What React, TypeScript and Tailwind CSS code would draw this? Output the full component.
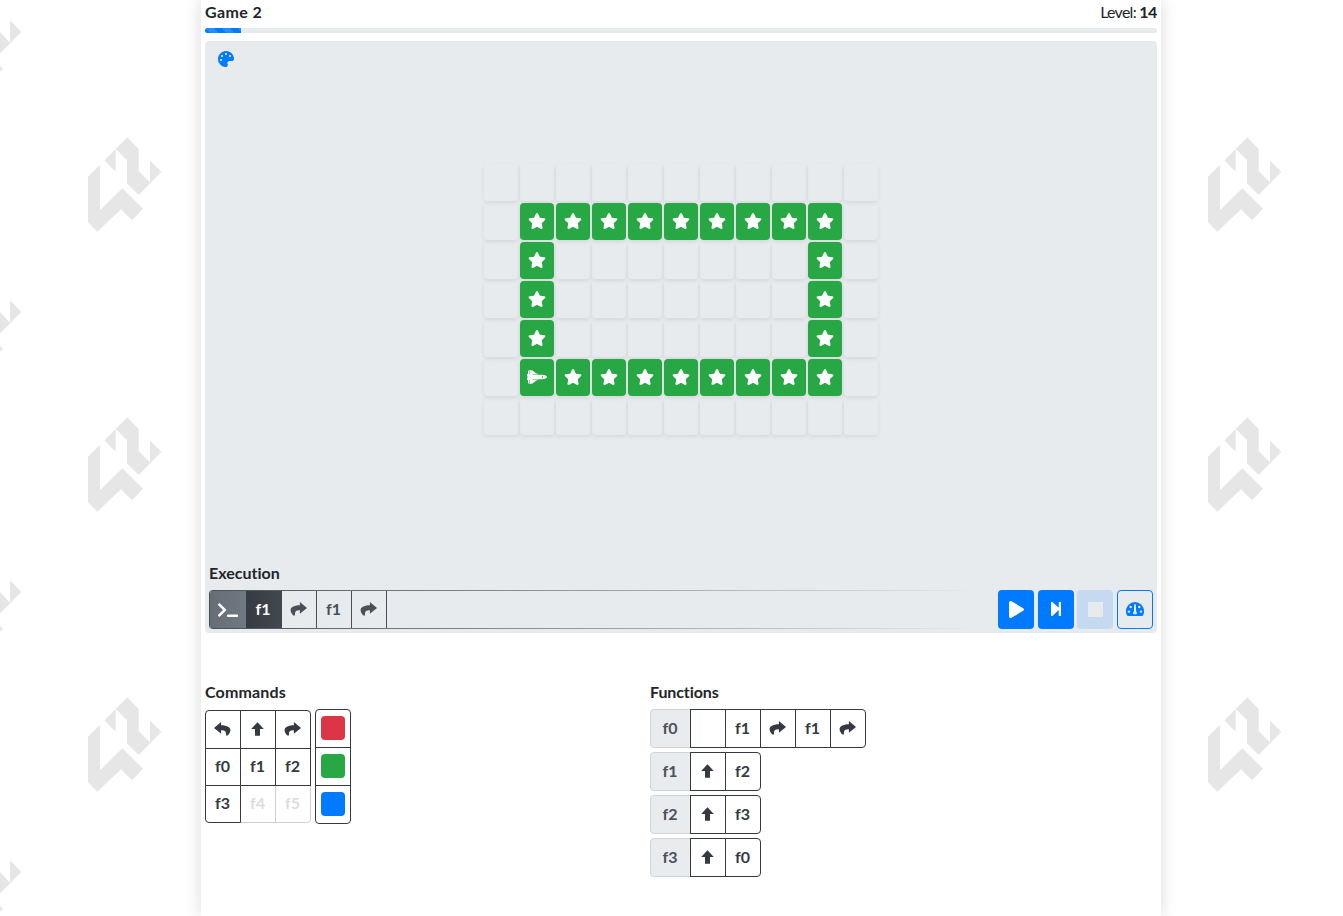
import type { ReactNode } from 'react';
import { FaPalette, FaPlay, FaSpaceShuttle, FaStar, FaStepForward, FaTerminal } from 'react-icons/fa';

const TurnRight = ({ flip = false }: { flip?: boolean }) => (
  <svg width="17" height="14" viewBox="0 0 16 14" preserveAspectRatio="none" fill="currentColor" className={flip ? '-scale-x-100' : ''}>
    <path d="M9.3 0.1 L16 5.9 L9.3 11.7 V8.3 C6 8.1 4.2 9.2 4.7 13.6 H3.2 C-1.6 8.6 0 3.4 9.3 3.3Z" />
  </svg>
);

const Up = () => (
  <svg width="13" height="14" viewBox="0 0 13 14" fill="currentColor">
    <path d="M6.5 0.2 L12.8 6.9 H9 V13.7 H4 V6.9 H0.2Z" />
  </svg>
);

const Speed = () => (
  <svg width="18" height="14" viewBox="0 0 18 14">
    <path fill="currentColor" d="M0 9a9 9 0 0 1 18 0c0 1.8-.4 3.4-1.2 4.6-.2.3-.4.4-.7.4H1.9c-.3 0-.5-.1-.7-.4C.4 12.4 0 10.8 0 9Z" />
    <g fill="#e7ebee">
      <circle cx="3" cy="9.6" r="1.2" />
      <circle cx="4.7" cy="5" r="1.2" />
      <circle cx="13.3" cy="5" r="1.2" />
      <circle cx="15" cy="9.6" r="1.2" />
      <path d="M8.2 2.2h1.6l.3 7.200a1.900 1.900 0 0 1 .4 2.800H7.500a1.900 1.900 0 0 1 .4-2.800Z" />
    </g>
  </svg>
);

const Backdrop = () => (
  <svg className="absolute inset-0" width="1343" height="916">
    <defs>
      <g id="mark" fill="#e6e6e6">
        <path d="M8 46.700 20 35v45.300L42.300 58.300 63 78.700 52 90.300 41 79.300 17.300 101.700 8 92.300Z" />
        <path d="M24.300 30.300 35.700 19v22.700Z" />
        <path d="M35.700 19 47.300 7.300 58.700 19v22L70 52.500V30.300L81.300 41.700 58.700 65 47 53.300V30.300Z" />
      </g>
    </defs>
    {[0, 1, 2, 3].map((i) => (
      <g key={i}>
        <use href="#mark" x={-60} y={-10 + i * 280} />
        <use href="#mark" x={80} y={130 + i * 280} />
        <use href="#mark" x={1200} y={130 + i * 280} />
      </g>
    ))}
  </svg>
);

const rows = ['...........', '.*********.', '.*.......*.', '.*.......*.', '.*.......*.', '.@********.', '...........'];

const Tile = ({ kind }: { kind: string }) =>
  kind === '.' ? (
    <div className="h-[37px] w-[34px] rounded shadow-[0_2px_4px_rgba(0,0,0,0.075)]" />
  ) : (
    <div className="flex h-[37px] w-[34px] items-center justify-center rounded bg-[#28a745] pb-px text-white shadow-[0_2px_4px_rgba(0,0,0,0.075)]">
      {kind === '*' ? <FaStar size={18} /> : <FaSpaceShuttle size={20} />}
    </div>
  );

const icons: Record<string, ReactNode> = { left: <TurnRight flip />, up: <Up />, right: <TurnRight />, '': null };
const show = (c: string) => (c in icons ? icons[c] : c);

const Cell = ({ c, className = '' }: { c: string; className?: string }) => (
  <div className={`-ml-px flex w-9 items-center justify-center border border-[#343a40] bg-white pr-px pb-0.5 font-bold text-[#343a40] ${className}`}>
    {show(c)}
  </div>
);

const functions = [
  ['f0', '', 'f1', 'right', 'f1', 'right'],
  ['f1', 'up', 'f2'],
  ['f2', 'up', 'f3'],
  ['f3', 'up', 'f0'],
];

const ExecCell = ({ c }: { c: string }) => (
  <div className="flex w-[35px] items-center justify-center border-r border-[#495057] pr-px pb-0.5 font-bold text-[#495057]">{show(c)}</div>
);

export default function App() {
  return (
    <div className="relative h-[916px] overflow-hidden bg-white font-[Lato,sans-serif] text-base leading-6 text-[#212529] [font-variant-ligatures:none]">
      <Backdrop />
      <main className="relative ml-[201px] h-full w-[960px] bg-white px-1 shadow-[0_0_16px_rgba(0,0,0,0.15)]">
        <header className="flex h-7 justify-between leading-[23px]">
          <h1 className="font-bold tracking-[0.4px]">Game 2</h1>
          <div className="tracking-[-0.75px]">
            Level: <b className="tracking-[-0.4px]">14</b>
          </div>
        </header>
        <div className="h-[5px] overflow-hidden rounded bg-[#e7ebee]">
          <div className="h-full w-9 bg-[#007bff] bg-[linear-gradient(45deg,rgba(255,255,255,0.15)_25%,transparent_25%,transparent_50%,rgba(255,255,255,0.15)_50%,rgba(255,255,255,0.15)_75%,transparent_75%,transparent)] bg-[length:16px_16px]" />
        </div>

        <section className="mt-2 flex h-[592px] flex-col rounded bg-[#e7ebee] px-1">
          <div className="h-[123px] pt-2.5 pl-[9px] text-[#007bff]">
            <FaPalette size={16} />
          </div>
          <div className="ml-[275px] flex flex-col gap-0.5">
            {rows.map((r, y) => (
              <div key={y} className="flex gap-0.5">
                {r.split('').map((k, x) => (
                  <Tile key={x} kind={k} />
                ))}
              </div>
            ))}
          </div>
          <h2 className="mt-[126px] font-bold">Execution</h2>
          <div className="mt-[5px] flex justify-between">
            <div className="flex h-[39px] w-[771px] flex-col overflow-hidden rounded-l border-l border-[#495057]">
              <div className="h-px shrink-0 bg-linear-to-r from-[#495057] to-transparent" />
              <div className="flex flex-1">
                <div className="flex w-9 items-center justify-center bg-linear-to-r from-[#656e77] to-[#707982] text-white">
                  <FaTerminal size={20} />
                </div>
                <div className="flex w-9 items-center justify-center bg-linear-to-r from-[#353b41] to-[#42484f] pr-0.5 pb-0.5 font-bold text-white">f1</div>
                <ExecCell c="right" />
                <ExecCell c="f1" />
                <ExecCell c="right" />
              </div>
              <div className="h-px shrink-0 bg-linear-to-r from-[#495057] to-transparent" />
            </div>
            <div className="flex h-[39px] gap-1">
              <button className="flex w-9 items-center justify-center rounded bg-[#007bff] pb-px text-white">
                <FaPlay size={17} />
              </button>
              <button className="flex w-9 items-center justify-center rounded bg-[#007bff] pr-px pb-px text-white">
                <FaStepForward size={16} />
              </button>
              <button className="-ml-px flex w-9 items-center justify-center rounded bg-[#c5daf1] pb-px">
                <span className="size-[15px] bg-[#e7ebee]" />
              </button>
              <button className="flex w-9 items-center justify-center rounded border border-[#007bff] pb-px text-[#007bff]">
                <Speed />
              </button>
            </div>
          </div>
        </section>

        <div className="mt-[47px] flex">
          <section className="w-[445px]">
            <h2 className="font-bold tracking-[0.15px]">Commands</h2>
            <div className="mt-[5px] flex gap-1">
              <div className="mt-px ml-px flex flex-col">
                <div className="flex h-[39px]">
                  <Cell c="left" className="rounded-tl" />
                  <Cell c="up" />
                  <Cell c="right" className="rounded-tr" />
                </div>
                <div className="z-10 -mt-px flex h-[38px]">
                  <Cell c="f0" />
                  <Cell c="f1" />
                  <Cell c="f2" />
                </div>
                <div className="-mt-px flex h-[38px]">
                  <Cell c="f3" className="z-10 rounded-bl" />
                  <Cell c="f4" className="border-[#ced0d1]! text-[#dcdddf]!" />
                  <Cell c="f5" className="rounded-br border-[#ced0d1]! text-[#dcdddf]!" />
                </div>
              </div>
              <div className="flex flex-col">
                <div className="flex h-[39px] w-9 items-center justify-center rounded-t border border-[#343a40] pb-px">
                  <span className="size-6 rounded bg-[#dc3545]" />
                </div>
                <div className="-mt-px flex h-[39px] w-9 items-center justify-center border border-[#343a40] pb-px">
                  <span className="size-6 rounded bg-[#28a745]" />
                </div>
                <div className="-mt-px flex h-[39px] w-9 items-center justify-center rounded-b border border-[#343a40] pb-px">
                  <span className="size-6 rounded bg-[#007bff]" />
                </div>
              </div>
            </div>
          </section>
          <section>
            <h2 className="font-bold tracking-[-0.1px]">Functions</h2>
            <div className="mt-[5px] flex flex-col gap-1">
              {functions.map(([name, ...cells]) => (
                <div key={name} className="flex h-[39px]">
                  <div className="flex w-[41px] items-center justify-center rounded-l border border-[#ced4da] bg-[#e9ecef] pr-px pb-0.5 font-bold text-[#495057]">{name}</div>
                  {cells.map((c, i) => (
                    <Cell key={i} c={c} className="last:rounded-r" />
                  ))}
                </div>
              ))}
            </div>
          </section>
        </div>
      </main>
    </div>
  );
}
